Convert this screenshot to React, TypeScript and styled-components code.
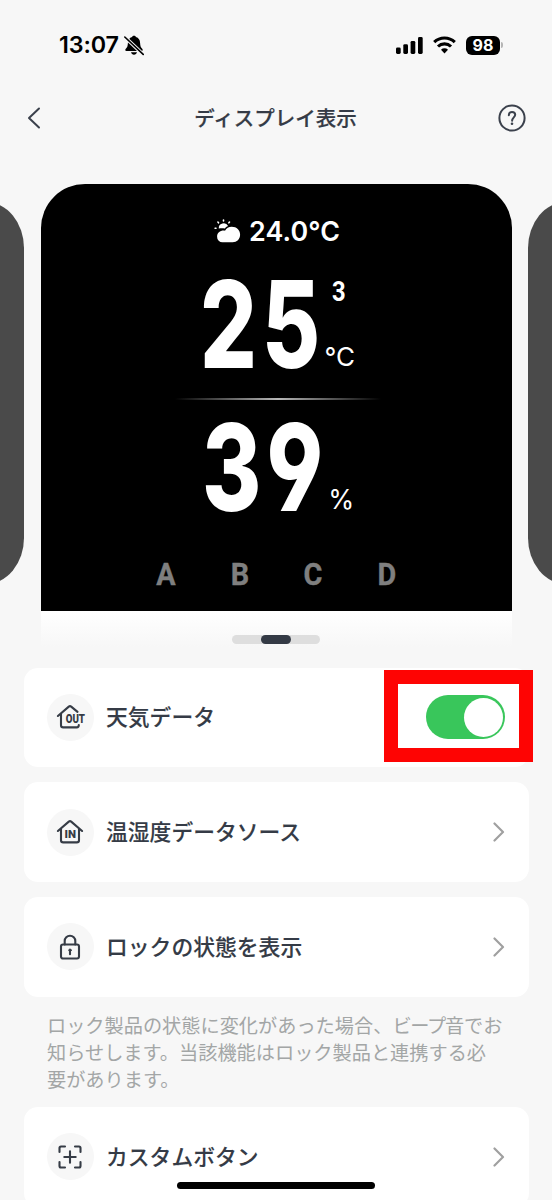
import React, { useState } from "react";
import styled, { createGlobalStyle } from "styled-components";

const GlobalStyle = createGlobalStyle`
  * { box-sizing: border-box; }
  body {
    margin: 0;
    background: #f7f7f7;
    color: #353b46;
    font-family: Inter, "Noto Sans CJK JP", sans-serif;
  }
`;

const Screen = styled.div`
  width: 552px;
  height: 1200px;
  overflow: hidden;
  position: relative;
  display: flex;
  flex-direction: column;
  background: #f7f7f7;
`;

const StatusBar = styled.div`
  height: 90px;
  flex: none;
  display: flex;
  align-items: center;
  justify-content: space-between;
  padding: 0 52px 0 59px;
  color: #000;
`;

const StatusGroup = styled.div<{ $gap: number }>`
  display: flex;
  align-items: center;
  gap: ${(p) => p.$gap}px;
`;

const Clock = styled.span`
  width: 61px;
  font-size: 23.3px;
  font-weight: 600;
  line-height: 28px;
  letter-spacing: -0.1px;
  white-space: nowrap;
`;

const Battery = styled.span`
  width: 34px;
  height: 19px;
  border-radius: 6px;
  background: #000;
  color: #fff;
  font-size: 16px;
  font-weight: 700;
  line-height: 19.5px;
  text-align: center;
`;

const BatteryTip = styled.span`
  width: 2px;
  height: 6px;
  margin-left: 1px;
  border-radius: 0 3px 3px 0;
  background: #b5b5b5;
`;

const BatteryGroup = styled.div`
  display: flex;
  align-items: center;
  margin-right: -3px;
`;

const NavBar = styled.header`
  height: 56px;
  flex: none;
  display: flex;
  align-items: center;
  justify-content: space-between;
  padding: 0 26px 0 27px;
`;

const NavTitle = styled.h1`
  margin: 0;
  padding: 0 0 2px 12px;
  font-family: "Noto Sans CJK JP", sans-serif;
  font-size: 20.5px;
  font-weight: 500;
  line-height: 30px;
  -webkit-text-stroke: 0.2px currentColor;
`;

const Carousel = styled.section`
  height: 427px;
  flex: none;
  margin-top: 38px;
  display: flex;
  justify-content: center;
  gap: 16.5px;
`;

const SidePanel = styled.div`
  width: 430px;
  height: 382px;
  flex: none;
  margin-top: 18px;
  border-radius: 38px / 46px;
  background: #4a4a4a;
`;

const Preview = styled.div`
  width: 471px;
  height: 427px;
  flex: none;
  display: flex;
  flex-direction: column;
  padding-top: 31px;
  border-radius: 44px 44px 0 0;
  background: #000;
  color: #fff;
`;

const Weather = styled.div`
  height: 32px;
  display: flex;
  align-items: center;
  padding-left: 173.5px;
  gap: 8px;
  font-size: 26.8px;
  font-weight: 600;
  line-height: 32px;
  letter-spacing: 0.15px;
  white-space: nowrap;
`;

const Reading = styled.div<{ $top: number; $left: number }>`
  height: 100px;
  display: flex;
  margin-top: ${(p) => p.$top}px;
  padding-left: ${(p) => p.$left}px;
`;

const BigNumber = styled.span<{ $width: number; $condense: number; $tracking: number }>`
  width: ${(p) => p.$width}px;
  font-family: Inter, sans-serif;
  font-size: 120.5px;
  font-weight: 800;
  font-feature-settings: "cv04" 1;
  letter-spacing: ${(p) => p.$tracking}px;
  line-height: 97px;
  transform: scaleX(${(p) => p.$condense});
  transform-origin: left;
`;

const UnitColumn = styled.div`
  display: flex;
  flex-direction: column;
  justify-content: space-between;
`;

const Decimal = styled.span`
  padding-left: 6px;
  font-family: Roboto, sans-serif;
  font-size: 27px;
  font-weight: 700;
  line-height: 32px;
  transform: scaleX(0.88);
`;

const Unit = styled.span`
  margin-top: auto;
  padding-bottom: 3.5px;
  font-size: 26px;
  font-weight: 400;
  line-height: 32px;
`;

const Percent = styled.span`
  margin-top: auto;
  padding: 0 0 3px 4px;
  font-size: 27px;
  line-height: 32px;
  transform: scaleX(0.98);
`;

const Divider = styled.div`
  width: 206px;
  height: 2px;
  margin: 22px 0 0 134px;
  background: linear-gradient(90deg, transparent, #b8b8b8 50%, transparent);
`;

const ButtonLetters = styled.div`
  display: flex;
  margin: 35.5px 0 0 88.5px;
  color: #7f7f7f;
  font-family: Roboto, sans-serif;
  font-size: 32px;
  font-weight: 700;
  line-height: 40px;
  -webkit-text-stroke: 0.4px currentColor;
`;

const ButtonLetter = styled.span`
  width: 73.7px;
  text-align: center;
  transform: scaleX(0.9);
`;

const PreviewFade = styled.div`
  width: 471px;
  height: 56.5px;
  flex: none;
  margin-left: 41px;
  padding-top: 24px;
  background: linear-gradient(#ffffff, #f7f7f7 36px);
`;

const Pager = styled.div`
  width: 88px;
  height: 8.5px;
  margin-left: 191px;
  padding-left: 29px;
  border-radius: 5px;
  background: #dedede;
`;

const PagerThumb = styled.div`
  width: 30px;
  height: 8.5px;
  border-radius: 5px;
  background: #343a45;
`;

const Settings = styled.main`
  display: flex;
  flex-direction: column;
  gap: 15.3px;
  padding: 0 23.5px;
`;

const Card = styled.div`
  height: 99.5px;
  flex: none;
  display: flex;
  align-items: center;
  padding: 0 23.5px;
  border-radius: 14px;
  background: #fff;
`;

const IconDisc = styled.span`
  width: 47px;
  height: 47px;
  flex: none;
  display: flex;
  align-items: center;
  justify-content: center;
  padding-right: 1px;
  border-radius: 50%;
  background: #f7f7f7;
`;

const CardLabel = styled.span`
  flex: 1;
  padding: 0 0 2px 12px;
  font-family: "Noto Sans CJK JP", sans-serif;
  font-size: 21.8px;
  font-weight: 500;
  line-height: 32px;
  -webkit-text-stroke: 0.1px currentColor;
`;

const Note = styled.p`
  margin: 0.5px 0 -1.5px;
  padding-left: 23.5px;
  color: #a3a6a6;
  font-family: "Noto Sans CJK JP", sans-serif;
  font-size: 19.2px;
  font-weight: 400;
  line-height: 27px;
  white-space: nowrap;
`;

const Tight = styled.span`
  letter-spacing: -1.3px;
`;

const Switch = styled.button<{ $on: boolean }>`
  width: 79px;
  height: 44px;
  display: flex;
  align-items: center;
  justify-content: ${(p) => (p.$on ? "flex-end" : "flex-start")};
  padding: 0 2px;
  border: 0;
  border-radius: 22px;
  background: ${(p) => (p.$on ? "#39c65b" : "#e3e3e5")};
`;

const Knob = styled.span`
  width: 39px;
  height: 39px;
  border-radius: 50%;
  background: #fff;
`;

const Highlight = styled.div`
  position: absolute;
  left: 384.4px;
  top: 670.3px;
  width: 148.4px;
  height: 91.4px;
  border: 14px solid #fe0403;
  pointer-events: none;
`;

const HomeIndicator = styled.div`
  position: absolute;
  left: 177px;
  top: 1182px;
  width: 198px;
  height: 7px;
  border-radius: 4px;
  background: #000;
`;

const BellOff = () => (
  <svg width="20" height="21" viewBox="0 0 20 21">
    <path
      d="M10 .8c1 0 1.700.5 1.900 1.300 2.800.8 4.100 3 4.200 5.900.1 3.300.8 4.500 2.100 5.800.9.900.6 2.200-.6 2.200H2.400c-1.200 0-1.500-1.300-.6-2.200C3.100 12.500 3.800 11.300 3.900 8c.1-2.900 1.400-5.100 4.200-5.900.2-.8.9-1.300 1.900-1.300zM7 17.300h6c-.4 1.500-1.500 2.500-3 2.500s-2.600-1-3-2.500z"
      fill="#000"
    />
    <path d="M.8 2 19.200 19.400" stroke="#f7f7f7" strokeWidth="3.600" />
    <path d="M.8 2 19.200 19.400" stroke="#000" strokeWidth="1.600" strokeLinecap="round" />
  </svg>
);

const Signal = () => (
  <svg width="27" height="17" viewBox="0 0 27 17">
    <rect x="0" y="10.500" width="4.700" height="6.500" rx="1.400" />
    <rect x="7.300" y="7.200" width="4.700" height="9.800" rx="1.400" />
    <rect x="14.600" y="3.900" width="4.700" height="13.100" rx="1.400" />
    <rect x="22" y="0" width="4.700" height="17" rx="1.400" />
  </svg>
);

const Wifi = () => (
  <svg width="23" height="18" viewBox="0 0 23 18" fill="none" stroke="#000" strokeWidth="3.100">
    <path d="M1.200 6.200a14.800 14.800 0 0 1 20.600 0" />
    <path d="M5 10.500a9.300 9.300 0 0 1 13 0" />
    <path d="M8 13.800a5 5 0 0 1 7 0l-3.500 3.700z" fill="#000" stroke="none" />
  </svg>
);

const BackArrow = () => (
  <svg width="14" height="22" viewBox="0 0 14 22" fill="none" stroke="#3b414c" strokeWidth="2" strokeLinecap="round" strokeLinejoin="round">
    <path d="M12 1.500 2 11l10 9.500" />
  </svg>
);

const Help = () => (
  <svg width="28" height="28" viewBox="0 0 28 28" fill="none" stroke="#3b414c" strokeWidth="2">
    <circle cx="14" cy="14" r="12.600" />
    <path d="M10.800 11.200c0-2.100 1.300-3.300 3.200-3.300s3.200 1.200 3.200 2.900c0 2.400-3.100 2.800-3.100 5.900" strokeLinecap="round" />
    <circle cx="14" cy="19.700" r="1.300" fill="#3b414c" stroke="none" />
  </svg>
);

const PartlyCloudy = () => (
  <svg width="27" height="24" viewBox="0 0 27 24" fill="#fff">
    <g stroke="#fff" strokeWidth="1.600" strokeLinecap="round">
      <path d="M9.500 1v.9M3.900 3.100l.6.700M15.500 3.100l-.6.700M1.100 9.300H2" />
    </g>
    <path d="M4.800 9.600a4.900 4.900 0 0 1 9.300-2.600c-1.500.5-2.500 1.300-3.200 2.500-2.300-.4-4.200-.4-6.100.1z" />
    <path d="M8.700 23.300a5.400 5.400 0 0 1-5.600-5.600c0-4 3.400-6.600 7.900-6 1.400-2.500 3.700-3.900 6.700-3.900 5 0 8.400 3.500 8.400 8s-3.300 7.500-7.500 7.500z" />
  </svg>
);

const iconStroke = {
  fill: "none",
  stroke: "#363c46",
  strokeWidth: 2.1,
  strokeLinecap: "round" as const,
  strokeLinejoin: "round" as const,
};

const HouseOut = () => (
  <svg width="40" height="28" viewBox="-4 0 40 28" {...iconStroke}>
    <path d="M23.500 8.900 17.200 3.600q-1.200-.9-2.400 0L3.900 13M7 10.800v11.400q0 2.200 2.200 2.200h13.600q2 0 2-2.400" />
    <text x="11.700" y="19.600" fontFamily="Roboto, sans-serif" fontSize="12" fontWeight="900" fill="#363c46" stroke="none" textLength="19.300" lengthAdjust="spacingAndGlyphs">OUT</text>
  </svg>
);

const HouseIn = () => (
  <svg width="32" height="28" viewBox="0 0 32 28" {...iconStroke}>
    <path d="M3.900 13 14.800 3.600q1.200-.9 2.400 0L28.100 13M7 10.800v11.400q0 2.200 2.200 2.200h13.600q2.200 0 2.200-2.200V10.800" />
    <text x="10.500" y="19.900" fontFamily="Roboto, sans-serif" fontSize="11.800" fontWeight="900" fill="#363c46" stroke="none" textLength="11.500" lengthAdjust="spacingAndGlyphs">IN</text>
  </svg>
);

const Lock = () => (
  <svg width="24" height="28" viewBox="0 0 24 28" {...iconStroke}>
    <rect x="3" y="11.500" width="18" height="14" rx="2" />
    <path d="M6.700 11.500V8a5.300 5.300 0 0 1 10.600 0v3.500M12 18v3.300" />
    <circle cx="12" cy="17.200" r="1.200" fill="#363c46" strokeWidth="1" />
  </svg>
);

const FramePlus = () => (
  <svg width="26" height="26" viewBox="0 0 26 26" {...iconStroke}>
    <path d="M2.500 8V4q0-1.500 1.500-1.500h4M18 2.500h4q1.500 0 1.500 1.500v4M23.500 18v4q0 1.500-1.500 1.500h-4M8 23.500H4q-1.500 0-1.500-1.500v-4M13 7.300v11.400M7.300 13h11.400" />
  </svg>
);

const Chevron = () => (
  <svg width="12" height="20" viewBox="0 0 12 20" fill="none" stroke="#a0a0a0" strokeWidth="2.200" strokeLinecap="round" strokeLinejoin="round">
    <path d="M1.500 1.500 10 10l-8.500 8.500" />
  </svg>
);

interface SettingRowProps {
  icon: React.ReactNode;
  label: string;
  children?: React.ReactNode;
}

const SettingRow = ({ icon, label, children }: SettingRowProps) => (
  <Card>
    <IconDisc>{icon}</IconDisc>
    <CardLabel>{label}</CardLabel>
    {children ?? <Chevron />}
  </Card>
);

export default function App() {
  const [weatherOn, setWeatherOn] = useState(true);

  return (
    <Screen>
      <GlobalStyle />
      <StatusBar>
        <StatusGroup $gap={4}>
          <Clock>13:07</Clock>
          <BellOff />
        </StatusGroup>
        <StatusGroup $gap={10}>
          <Signal />
          <Wifi />
          <BatteryGroup>
            <Battery>98</Battery>
            <BatteryTip />
          </BatteryGroup>
        </StatusGroup>
      </StatusBar>
      <NavBar>
        <BackArrow />
        <NavTitle>ディスプレイ表示</NavTitle>
        <Help />
      </NavBar>
      <Carousel>
        <SidePanel />
        <Preview>
          <Weather>
            <PartlyCloudy />
            24.0°C
          </Weather>
          <Reading $top={29} $left={159}>
            <BigNumber $width={125} $condense={0.74} $tracking={7}>25</BigNumber>
            <UnitColumn>
              <Decimal>3</Decimal>
              <Unit>°C</Unit>
            </UnitColumn>
          </Reading>
          <Divider />
          <Reading $top={18.5} $left={161}>
            <BigNumber $width={122} $condense={0.75} $tracking={7}>39</BigNumber>
            <UnitColumn>
              <Percent>%</Percent>
            </UnitColumn>
          </Reading>
          <ButtonLetters>
            {["A", "B", "C", "D"].map((letter) => (
              <ButtonLetter key={letter}>{letter}</ButtonLetter>
            ))}
          </ButtonLetters>
        </Preview>
        <SidePanel />
      </Carousel>
      <PreviewFade>
        <Pager>
          <PagerThumb />
        </Pager>
      </PreviewFade>
      <Settings>
        <SettingRow icon={<HouseOut />} label="天気データ">
          <Switch $on={weatherOn} onClick={() => setWeatherOn(!weatherOn)}>
            <Knob />
          </Switch>
        </SettingRow>
        <SettingRow icon={<HouseIn />} label="温湿度データソース" />
        <SettingRow icon={<Lock />} label="ロックの状態を表示" />
        <Note>
          ロック製品の状態に変化があった場合、<Tight>ビープ</Tight>音でお
          <br />
          知らせします。当該機能はロック製品と連携する必
          <br />
          要があります。
        </Note>
        <SettingRow icon={<FramePlus />} label="カスタムボタン" />
      </Settings>
      <Highlight />
      <HomeIndicator />
    </Screen>
  );
}
